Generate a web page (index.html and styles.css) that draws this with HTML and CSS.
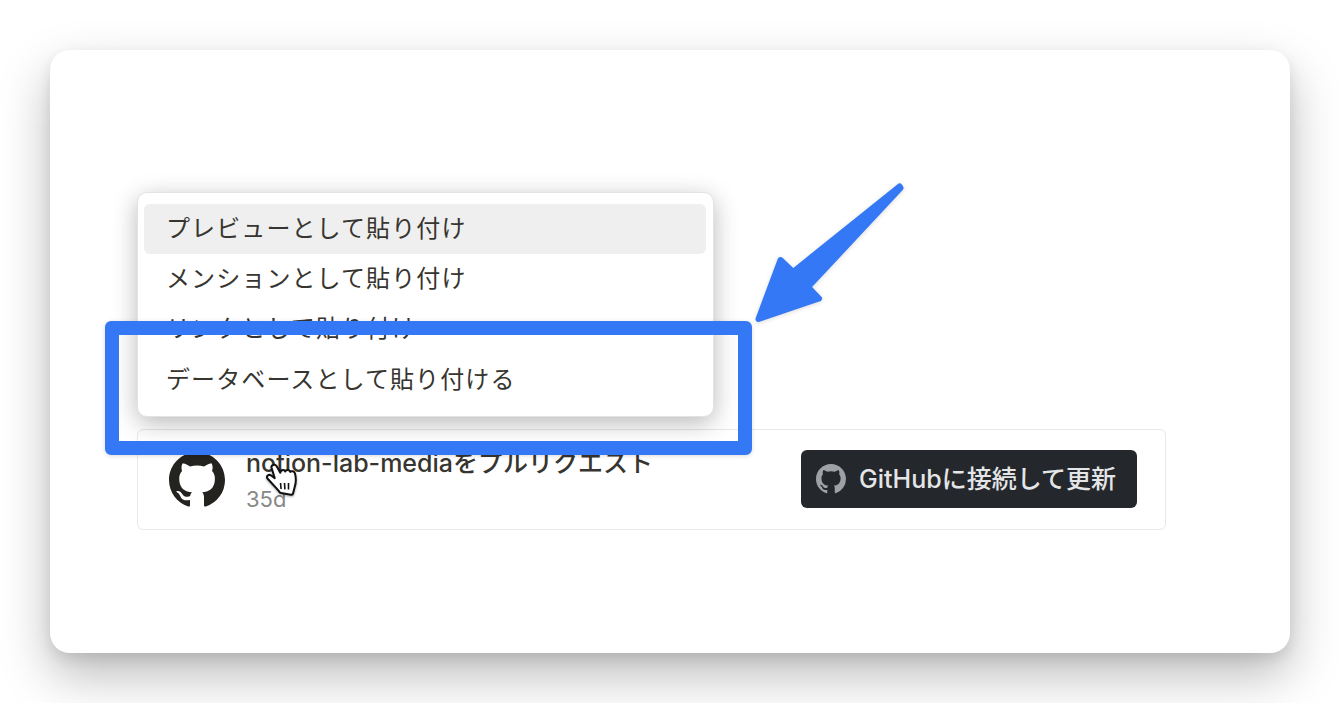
FILE: index.html
```html
<!DOCTYPE html>
<html lang="ja">
<head>
<meta charset="utf-8">
<title>Paste menu</title>
<link rel="stylesheet" href="styles.css">
</head>
<body>
<main class="card">
  <ul class="menu">
    <li class="menu-item is-active">プレビューとして貼り付け</li>
    <li class="menu-item">メンションとして貼り付け</li>
    <li class="menu-item">リンクとして貼り付け</li>
    <li class="menu-item">データベースとして貼り付ける</li>
  </ul>
  <section class="pr">
    <svg class="pr-logo" viewBox="0 0 16 16" aria-hidden="true"><path d="M8 0C3.58 0 0 3.58 0 8c0 3.54 2.29 6.53 5.47 7.59.4.07.55-.17.55-.38 0-.19-.01-.82-.01-1.49-2.01.37-2.53-.49-2.69-.94-.09-.23-.48-.94-.82-1.13-.28-.15-.68-.52-.01-.53.63-.01 1.08.58 1.23.82.72 1.21 1.87.87 2.33.66.07-.52.28-.87.51-1.07-1.78-.2-3.64-.89-3.64-3.95 0-.87.31-1.59.82-2.15-.08-.2-.36-1.02.08-2.12 0 0 .67-.21 2.2.82.64-.18 1.32-.27 2-.27.68 0 1.36.09 2 .27 1.53-1.04 2.2-.82 2.2-.82.44 1.1.16 1.92.08 2.12.51.56.82 1.27.82 2.15 0 3.07-1.87 3.75-3.65 3.95.29.25.54.73.54 1.48 0 1.07-.01 1.93-.01 2.2 0 .21.15.46.55.38A8.013 8.013 0 0016 8c0-4.42-3.58-8-8-8z"/></svg>
    <div class="pr-text">
      <div class="pr-title">notion-lab-mediaをプルリクエスト</div>
      <div class="pr-age">35d</div>
    </div>
    <button class="connect" type="button">
      <svg class="connect-logo" viewBox="0 0 16 16" aria-hidden="true"><path d="M8 0C3.58 0 0 3.58 0 8c0 3.54 2.29 6.53 5.47 7.59.4.07.55-.17.55-.38 0-.19-.01-.82-.01-1.49-2.01.37-2.53-.49-2.69-.94-.09-.23-.48-.94-.82-1.13-.28-.15-.68-.52-.01-.53.63-.01 1.08.58 1.23.82.72 1.21 1.87.87 2.33.66.07-.52.28-.87.51-1.07-1.78-.2-3.64-.89-3.64-3.95 0-.87.31-1.59.82-2.15-.08-.2-.36-1.02.08-2.12 0 0 .67-.21 2.2.82.64-.18 1.32-.27 2-.27.68 0 1.36.09 2 .27 1.53-1.04 2.2-.82 2.2-.82.44 1.1.16 1.92.08 2.12.51.56.82 1.27.82 2.15 0 3.07-1.87 3.75-3.65 3.95.29.25.54.73.54 1.48 0 1.07-.01 1.93-.01 2.2 0 .21.15.46.55.38A8.013 8.013 0 0016 8c0-4.42-3.58-8-8-8z"/></svg>
      <span class="connect-label">GitHubに接続して更新</span>
    </button>
  </section>

  <div class="highlight"></div>
  <svg class="arrow" viewBox="750 180 160 146" aria-hidden="true">
    <polygon points="899.5,186.5 900.5,188 808,287 819,298.5 758.5,319 780.5,260 793,272" />
  </svg>
  <svg class="cursor" viewBox="0 0 40 42" aria-hidden="true">
    <path class="cursor-hand" d="M9.5 9.5c-.6-2.4 3.6-4 5-1.4l3.8 6.6c.2-2.6 3.8-3.6 5-1.2.8-2 4-2 5 .4 1.2-1.4 4-.6 4.6 1.4 1.2 4.4 1.2 9.4-.2 13.6l-1.6 6.4c-.2 1-1 1.6-2 1.4l-10-1.6c-.8-.2-1.4-.6-1.8-1.4l-3-3.6-8.6-9.4c-2-2.2 1-5 3.4-3.2l3.6 2.6z"/>
    <path class="cursor-lines" d="M18.500 25l.6 6M22.500 25l.4 6.400M26.500 25l0 6.600"/>
  </svg>
</main>
</body>
</html>
```
FILE: styles.css
```css
* { box-sizing: border-box; }
html, body { margin: 0; height: 100%; }
body {
  background: #fff;
  padding: 50px;
  overflow: hidden;
  font-family: Inter, "Noto Sans CJK JP", sans-serif;
}
.card {
  position: relative;
  width: 1240px;
  height: 603px;
  background: #fff;
  border-radius: 20px;
  padding: 142px 0 0 87px;
  box-shadow: 0 22px 50px rgba(0, 0, 0, .27), 0 6px 14px rgba(0, 0, 0, .09);
}
.menu {
  list-style: none;
  margin: 0;
  width: 577px;
  height: 225px;
  padding: 11px 7px 0 6px;
  background: #fff;
  border: 1px solid #e3e3e3;
  border-radius: 10px;
  box-shadow: 0 6px 24px rgba(0, 0, 0, .28);
  position: relative;
  z-index: 1;
}
.menu-item {
  height: 50px;
  padding-left: 22px;
  line-height: 49px;
  font-size: 24px;
  letter-spacing: 1.1px;
  color: #37352f;
  border-radius: 6px;
}
.menu-item:last-child { line-height: 51px; }
.menu-item.is-active { background: #efefef; }
.pr {
  display: flex;
  align-items: center;
  width: 1029px;
  height: 101px;
  margin-top: 12px;
  padding: 0 28px 0 31px;
  border: 1px solid #e8e8e8;
  border-radius: 6px;
}
.pr-logo {
  width: 56px;
  height: 56px;
  margin-right: 21px;
  fill: #24231f;
}
.pr-text { flex: 1; }
.pr-title {
  font-size: 25px;
  line-height: 32px;
  font-weight: 500;
  margin-top: 4px;
  color: #37352f;
}
.pr-age {
  font-size: 22px;
  line-height: 30px;
  margin-top: 5px;
  margin-bottom: 2px;
  color: #888886;
}
.connect {
  display: flex;
  align-items: center;
  gap: 13px;
  width: 336px;
  height: 58px;
  padding: 0 0 0 15px;
  margin-bottom: 2px;
  border: 0;
  border-radius: 6px;
  background: #24272c;
  color: #e4e5e7;
  font: 500 25px Inter, "Noto Sans CJK JP", sans-serif;
}
.connect-label { margin-top: -3px; }
.connect-logo {
  width: 30px;
  height: 30px;
  fill: #a0a1a4;
}
.highlight {
  position: absolute;
  left: 55px;
  top: 271px;
  width: 647px;
  height: 134px;
  border: 14px solid #3478f6;
  border-radius: 6px;
  box-shadow: 0 1px 4px rgba(0, 0, 0, .15);
  z-index: 2;
}
.arrow {
  position: absolute;
  left: 700px;
  top: 130px;
  width: 160px;
  height: 146px;
  overflow: visible;
  z-index: 2;
  filter: drop-shadow(0 1px 2px rgba(0, 0, 0, .15));
}
.arrow polygon {
  fill: #3478f6;
  stroke: #3478f6;
  stroke-width: 6;
  stroke-linejoin: round;
}
.cursor {
  position: absolute;
  left: 212px;
  top: 408px;
  width: 40px;
  height: 42px;
  z-index: 3;
  filter: drop-shadow(0 1px 1px rgba(0, 0, 0, .35));
}
.cursor-hand {
  fill: #fff;
  stroke: #111;
  stroke-width: 2;
  stroke-linejoin: round;
}
.cursor-lines {
  fill: none;
  stroke: #111;
  stroke-width: 1.6;
}
```
